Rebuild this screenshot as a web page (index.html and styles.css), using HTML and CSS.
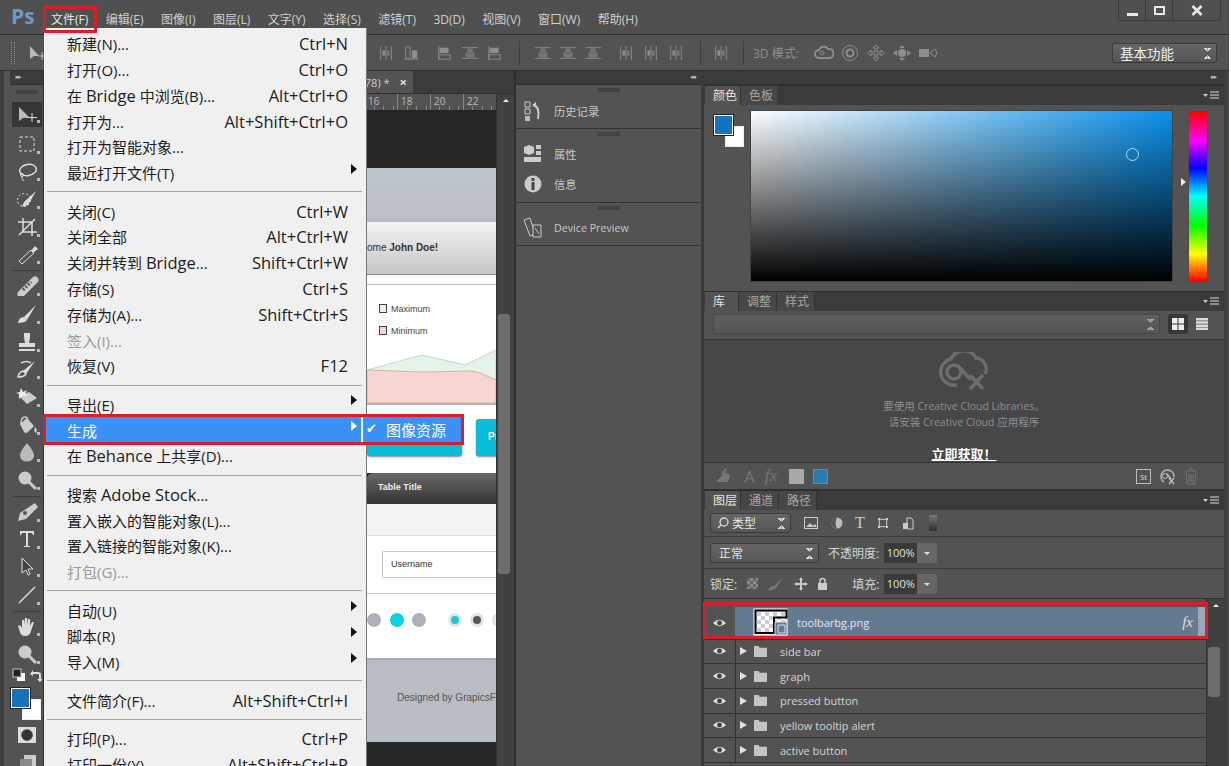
FILE: index.html
```html
<!DOCTYPE html>
<html lang="zh-CN">
<head>
    <meta charset="UTF-8">
    <meta name="viewport" content="width=device-width, initial-scale=1.0">
    <title>Adobe Photoshop</title>
    <link rel="stylesheet" href="styles.css">
</head>
<body>
    <!-- Shared icons -->
    <svg class="sprite" xmlns="http://www.w3.org/2000/svg">
        <symbol id="i-eye" viewBox="0 0 16 12"><path d="M1 6q7-7 14 0q-7 7-14 0z" fill="#ddd"/><circle cx="8" cy="6" r="2.6" fill="#444"/></symbol>
        <symbol id="i-folder" viewBox="0 0 16 14"><path d="M1 1h5l1 2h8v10H1z" fill="#c4c4c4"/></symbol>
        <symbol id="i-panelmenu" viewBox="0 0 16 8"><path d="M0 3h5L2.5 6z" fill="#ccc"/><path d="M7 1h9M7 4h9M7 7h9" stroke="#ddd"/></symbol>
        <symbol id="i-grip" viewBox="0 0 22 4"><path d="M1 0v4M3 0v4M5 0v4M7 0v4M9 0v4M11 0v4M13 0v4M15 0v4M17 0v4M19 0v4M21 0v4" stroke="#333"/></symbol>
        <symbol id="i-align" viewBox="0 0 18 18"><path d="M1 16h16M3 2h5v13H3z" stroke="#8e8e8e" fill="none"/><path d="M10 6h6v9h-6z" fill="#8e8e8e"/></symbol>
        <symbol id="i-alignl" viewBox="0 0 18 18"><path d="M2 1v16M2 11h13v5H2z" stroke="#8e8e8e" fill="none"/><path d="M3 3h10v6H3z" fill="#8e8e8e"/></symbol>
        <symbol id="i-alignh" viewBox="0 0 18 18"><path d="M0 3h18M0 15h18M4 9h10" stroke="#8e8e8e"/><path d="M6 4h6v4H6zM4 10h10v4H4z" fill="#777"/></symbol>
        <symbol id="i-alignv" viewBox="0 0 18 18"><path d="M3 1v16M15 1v16M9 1v16" stroke="#8e8e8e"/><path d="M5 6h3v6H5z" fill="#8e8e8e"/><path d="M10 6h3v6h-3z" fill="#777"/></symbol>
    </svg>

    <div class="app">
        <!-- Title and menu bar -->
        <header class="titlebar">
            <div class="ps-logo">Ps</div>
            <nav class="menubar">
                <span class="menubar-item is-open">文件(F)</span>
                <span class="menubar-item">编辑(E)</span>
                <span class="menubar-item">图像(I)</span>
                <span class="menubar-item">图层(L)</span>
                <span class="menubar-item">文字(Y)</span>
                <span class="menubar-item">选择(S)</span>
                <span class="menubar-item">滤镜(T)</span>
                <span class="menubar-item">3D(D)</span>
                <span class="menubar-item">视图(V)</span>
                <span class="menubar-item">窗口(W)</span>
                <span class="menubar-item">帮助(H)</span>
            </nav>
            <div class="win-buttons">
                <div class="win-btn win-min"><i></i></div>
                <div class="win-btn win-max"><i></i></div>
                <div class="win-btn win-close">
                    <svg width="12" height="11" viewBox="0 0 12 11"><path d="M1.5 1l9 9M10.5 1l-9 9" stroke="#e8e8e8" stroke-width="2.6"/></svg>
                </div>
            </div>
        </header>

        <!-- Options bar -->
        <div class="optionsbar">
            <div class="opt-grip"></div>
            <svg class="opt-move" width="20" height="18" viewBox="0 0 20 18"><path d="M2 2v13l4-3 5 0z" fill="#bbb"/><path d="M14 8v8M10 12h8" stroke="#bbb"/></svg>
            <div class="opt-icons">
                <svg class="op op-s1"><use href="#i-alignv"/></svg>
                <svg class="op op-s2"><use href="#i-align"/></svg>
                <svg class="op op-s3"><use href="#i-alignl"/></svg>
                <svg class="op op-s2"><use href="#i-alignh"/></svg>
                <svg class="op op-s2"><use href="#i-alignl"/></svg>
                <div class="opt-sep"></div>
                <svg class="op op-s2"><use href="#i-alignh"/></svg>
                <svg class="op op-s2"><use href="#i-alignh"/></svg>
                <svg class="op op-s2"><use href="#i-alignh"/></svg>
                <svg class="op op-s4"><use href="#i-alignv"/></svg>
                <svg class="op op-s2"><use href="#i-alignv"/></svg>
                <svg class="op op-s2"><use href="#i-alignv"/></svg>
                <div class="opt-sep opt-sep-b"></div>
                <svg class="op op-s2"><use href="#i-alignv"/></svg>
                <div class="opt-sep opt-sep-c"></div>
            </div>
            <span class="opt-label">3D 模式:</span>
            <div class="opt-3d">
                <svg width="20" height="18" viewBox="0 0 20 18"><path d="M5 14a4 4 0 0 1 0-8a5 5 0 0 1 9-1a4 4 0 0 1 2 9z" fill="none" stroke="#8e8e8e" stroke-width="2"/><circle cx="8" cy="9" r="2" fill="none" stroke="#8e8e8e"/></svg>
                <svg width="20" height="18" viewBox="0 0 20 18"><circle cx="10" cy="9" r="7.5" fill="none" stroke="#8e8e8e"/><circle cx="10" cy="9" r="3.5" fill="none" stroke="#8e8e8e" stroke-width="2"/></svg>
                <svg width="20" height="18" viewBox="0 0 20 18"><path d="M10 1l3 3h-2v4h4V6l3 3-3 3v-2h-4v4h2l-3 3-3-3h2v-4H5v2L2 9l3-3v2h4V4H7z" fill="none" stroke="#8e8e8e"/></svg>
                <svg width="20" height="18" viewBox="0 0 20 18"><path d="M10 1l3 3H7zM10 17l3-3H7zM1 9l4-3v6zM19 9l-4-3v6z" fill="#8e8e8e"/><circle cx="10" cy="9" r="4" fill="#8e8e8e"/></svg>
                <svg width="20" height="18" viewBox="0 0 20 18"><path d="M1 5h10v8H1z" fill="#8e8e8e"/><path d="M12 9l5-4 2 4-2 4z" fill="none" stroke="#8e8e8e"/></svg>
            </div>
            <div class="workspace-select">基本功能<span class="updown"></span></div>
        </div>

        <div class="workspace">
            <!-- Tools -->
            <aside class="toolbar">
                <div class="collapse-strip"><span class="chev">▸▸</span></div>
                <svg class="grip-icon"><use href="#i-grip"/></svg>
                <div class="tool is-active"><svg viewBox="0 0 24 20"><path d="M4 2v14l4-3 7 0z" fill="#bbb"/><path d="M17 8v9M13 12.5h9" stroke="#ddd"/></svg></div>
                <div class="tool"><svg viewBox="0 0 24 20"><rect x="5" y="3" width="14" height="14" fill="none" stroke="#ddd" stroke-dasharray="3 2"/></svg></div>
                <div class="tool"><svg viewBox="0 0 24 20"><ellipse cx="13" cy="8" rx="8.5" ry="5.5" fill="none" stroke="#ddd" stroke-width="1.5" transform="rotate(-10 13 8)"/><circle cx="7" cy="13" r="1.5" fill="none" stroke="#ddd"/><path d="M7 14q-1 3 2 5" fill="none" stroke="#ddd"/></svg></div>
                <div class="tool"><svg viewBox="0 0 24 20"><circle cx="9" cy="11" r="6.5" fill="none" stroke="#ddd" stroke-dasharray="2 2"/><path d="M21 2L9 13l-2 5 6-2z" fill="#ddd"/></svg></div>
                <div class="tool"><svg viewBox="0 0 24 20"><path d="M8 1v14h14M3 5h14v14M4 18L20 2" fill="none" stroke="#ddd" stroke-width="1.5"/></svg></div>
                <div class="tool"><svg viewBox="0 0 24 20"><path d="M7 19l-3-3L16 5l3 3z" fill="none" stroke="#ddd"/><path d="M16 6l4-5 3 3-5 4z" fill="#ddd"/></svg></div>
                <div class="tool-sep"></div>
                <div class="tool"><svg viewBox="0 0 24 20"><path d="M6 18L20 4" stroke="#ccc" stroke-width="7" stroke-linecap="round"/><path d="M8 14l8-8" stroke="#555" stroke-width="3" stroke-dasharray="2 1.5"/></svg></div>
                <div class="tool"><svg viewBox="0 0 24 20"><path d="M21 1L9 13l3 3z" fill="#ddd"/><path d="M9 13q-5 0-6 6q7 0 9-3z" fill="#ddd"/></svg></div>
                <div class="tool"><svg viewBox="0 0 24 20"><path d="M9 1h6v4l-1 6h6v4H4v-4h6L9 5zM4 17h16v2H4z" fill="#ddd"/></svg></div>
                <div class="tool"><svg viewBox="0 0 24 20"><path d="M20 2L8 12l3 3z" fill="#ddd"/><path d="M8 12q-4 1-5 6q6 0 8-3zM6 4q6-3 10 0" fill="none" stroke="#ddd" stroke-width="1.5"/></svg></div>
                <div class="tool"><svg viewBox="0 0 24 20"><path d="M4 9l8 8 10-6-8-6z" fill="#ccc"/><path d="M6 1l2 4 4-2-2 4 3 2-6 0-3 3 0-5-3-1 4-1z" fill="#eee"/></svg></div>
                <div class="tool"><svg viewBox="0 0 24 20"><path d="M5 9l7-6 7 8-6 6q-2 2-4 0z" fill="#ccc"/><path d="M6 9q0-7 4-7t2 7" fill="none" stroke="#ccc" stroke-width="1.5"/><path d="M20 12q3 3 1 6q-3-1-1-6z" fill="#ccc"/></svg></div>
                <div class="tool"><svg viewBox="0 0 24 20"><path d="M12 1q8 10 7 13a7 5.5 0 0 1-14 0Q4 11 12 1z" fill="#bbb"/></svg></div>
                <div class="tool"><svg viewBox="0 0 24 20"><circle cx="10" cy="8" r="6.5" fill="#ccc"/><path d="M14 12l7 7" stroke="#ccc" stroke-width="3"/></svg></div>
                <div class="tool-sep"></div>
                <div class="tool"><svg viewBox="0 0 24 20"><path d="M20 1l3 4-12 12-8 2 2-8z" fill="#ccc"/><circle cx="10" cy="11" r="2" fill="#555"/></svg></div>
                <div class="tool"><svg viewBox="0 0 24 20"><path d="M5 2h14v4h-1l-1-2h-4v13h2v1H9v-1h2V4H7L6 6H5z" fill="#ddd"/></svg></div>
                <div class="tool"><svg viewBox="0 0 24 20"><path d="M7 1v15l4-3 2 5 2-1-2-5h5z" fill="#444" stroke="#ddd"/></svg></div>
                <div class="tool"><svg viewBox="0 0 24 20"><path d="M4 18L20 2" stroke="#ddd" stroke-width="1.5"/></svg></div>
                <div class="tool-sep"></div>
                <div class="tool"><svg viewBox="0 0 24 20"><path d="M7 9V3h2v5l1-7h2v7l1-6h2v7l2-4h2l-3 9q-1 5-6 5-4 0-5-4L3 9l2-1 2 3z" fill="#ddd"/></svg></div>
                <div class="tool"><svg viewBox="0 0 24 20"><circle cx="10" cy="8" r="6.5" fill="#ccc"/><path d="M14 12l7 7" stroke="#ccc" stroke-width="3"/></svg></div>
                <div class="swatch-mini">
                    <svg width="14" height="14" viewBox="0 0 14 14"><rect x="5" y="5" width="8" height="8" fill="#fff"/><rect x="1" y="1" width="8" height="8" fill="#222" stroke="#ccc"/></svg>
                    <svg width="14" height="14" viewBox="0 0 14 14"><path d="M2 6l3-4v2h5a3 3 0 0 1 3 3v4h2l-3 3-3-3h2V7a1 1 0 0 0-1-1H5v2z" fill="#ddd"/></svg>
                </div>
                <div class="swatches swatches-tool">
                    <div class="swatch-bg"></div>
                    <div class="swatch-fg"></div>
                </div>
                <div class="tool tool-mask"><svg viewBox="0 0 24 20"><rect x="3" y="2" width="18" height="16" fill="#ddd"/><circle cx="12" cy="10" r="5.5" fill="#333" stroke="#555" stroke-dasharray="2 1"/></svg></div>
                <div class="tool"><svg viewBox="0 0 24 20"><path d="M9 2h12v12H9z" fill="#ccc"/><path d="M5 6h12v12H5z" fill="#888"/></svg></div>
            </aside>

            <!-- Document window, mostly hidden behind the menu -->
            <main class="document">
                <div class="doc-tabs">
                    <div class="doc-tab"><span>78) *</span><b>×</b></div>
                </div>
                <div class="doc-ruler">
                    <span class="tick">16</span><span class="tick">18</span><span class="tick">20</span><span class="tick">22</span>
                </div>
                <div class="doc-body">
                    <div class="canvas">
                        <div class="cv-dark"></div>
                        <div class="cv-band"></div>
                        <div class="cv-welcome">ome&nbsp;<b>John Doe!</b></div>
                        <div class="cv-strip"></div>
                        <div class="cv-graph">
                            <div class="legend"><i class="legend-max"></i>Maximum</div>
                            <div class="legend"><i class="legend-min"></i>Minimum</div>
                            <svg class="graph-svg" viewBox="0 0 129 60" preserveAspectRatio="none">
                                <path d="M0 27L55 12L98 22L129 7V60H0z" fill="#e3f5e9" stroke="#c4d8ca"/>
                                <path d="M0 27L55 29L105 28L113 30L129 37V60H0z" fill="#f7d5d2" stroke="#d8b0ae"/>
                            </svg>
                        </div>
                        <div class="cv-buttons">
                            <div class="cv-btn cv-btn-a"></div>
                            <div class="cv-btn cv-btn-b">Pr</div>
                        </div>
                        <div class="cv-table">Table Title</div>
                        <div class="cv-gap"></div>
                        <div class="cv-form"><div class="cv-input">Username</div></div>
                        <div class="cv-dots">
                            <i class="dot"></i><i class="dot dot-on"></i><i class="dot"></i>
                            <i class="radio radio-on"></i><i class="radio"></i><i class="radio radio-off"></i>
                        </div>
                        <div class="cv-footer">Designed by GrapicsF</div>
                        <div class="cv-dark"></div>
                    </div>
                    <div class="doc-scroll"><span class="doc-scroll-up"></span><div class="doc-thumb"></div></div>
                </div>
            </main>

            <!-- Collapsed panels -->
            <section class="dock-mid">
                <div class="collapse-strip collapse-right"><span class="chev">◂◂</span></div>
                <div class="dock-group">
                    <svg class="grip-icon"><use href="#i-grip"/></svg>
                    <div class="dock-item">
                        <svg width="20" height="20" viewBox="0 0 20 20"><path d="M2 1h5v5H2zM2 8h5v5H2z" fill="none" stroke="#ccc"/><path d="M2 15h5v5H2z" fill="#bbb"/><path d="M11 4q6 2 4 14" fill="none" stroke="#ccc" stroke-width="2"/><path d="M9 4l4-3v6z" fill="#ccc"/></svg>
                        <span>历史记录</span>
                    </div>
                </div>
                <div class="dock-group">
                    <svg class="grip-icon"><use href="#i-grip"/></svg>
                    <div class="dock-item">
                        <svg width="20" height="20" viewBox="0 0 20 20"><path d="M6 1l5 2v6l-5 2-5-2V3z" fill="#ccc"/><path d="M13 1h5v4h-5zM13 7h5v4h-5zM1 13h17v5H1z" fill="#ccc"/></svg>
                        <span>属性</span>
                    </div>
                    <div class="dock-item">
                        <svg width="20" height="20" viewBox="0 0 20 20"><circle cx="10" cy="10" r="8.5" fill="#ccc"/><path d="M8.500 8h3v8h-3zM8.500 4h3v3h-3z" fill="#444"/></svg>
                        <span>信息</span>
                    </div>
                </div>
                <div class="dock-group">
                    <svg class="grip-icon"><use href="#i-grip"/></svg>
                    <div class="dock-item">
                        <svg width="20" height="22" viewBox="0 0 20 22"><path d="M1 3l6-2 5 16-5 2z" fill="none" stroke="#ccc"/><path d="M10 8h8v12h-8z" fill="#535353" stroke="#ccc"/><path d="M12 11l4 6" stroke="#ccc"/></svg>
                        <span class="dock-latin">Device Preview</span>
                    </div>
                </div>
            </section>

            <!-- Right hand panels -->
            <section class="dock-right">
                <div class="collapse-strip collapse-left"><span class="chev">▸▸</span></div>

                <div class="tabs">
                    <span class="tab is-active">颜色</span><span class="tab">色板</span>
                    <svg class="panel-menu"><use href="#i-panelmenu"/></svg>
                </div>
                <div class="color-panel">
                    <div class="swatches">
                        <div class="swatch-bg"></div>
                        <div class="swatch-fg"></div>
                    </div>
                    <div class="color-field"><i class="color-pick"></i></div>
                    <div class="hue-wrap"><i class="hue-arrow"></i><div class="hue-bar"></div></div>
                </div>

                <div class="tabs">
                    <span class="tab tab-lib is-active">库</span><span class="tab">调整</span><span class="tab">样式</span>
                    <svg class="panel-menu"><use href="#i-panelmenu"/></svg>
                </div>
                <div class="lib-top">
                    <div class="lib-select"><span class="updown"></span></div>
                    <div class="lib-view is-active">
                        <svg width="12" height="12" viewBox="0 0 12 12"><path d="M0 0h5.500v5.500H0zM6.500 0H12v5.500H6.500zM0 6.500h5.500V12H0zM6.500 6.500H12V12H6.500z" fill="#eee"/></svg>
                    </div>
                    <div class="lib-view">
                        <svg width="12" height="12" viewBox="0 0 12 12"><path d="M0 0h12v2.500H0zM0 3.200h12v2.500H0zM0 6.400h12v2.500H0zM0 9.500h12V12H0z" fill="#ddd"/></svg>
                    </div>
                </div>
                <div class="lib-body">
                    <svg class="lib-cloud" width="50" height="40" viewBox="0 0 50 40"><path d="M18 33a13 13 0 0 1-6-26a14 14 0 0 1 25-1a11 11 0 0 1 9 16" fill="none" stroke="#6c6c6c" stroke-width="3.5"/><circle cx="15" cy="20" r="7" fill="none" stroke="#6c6c6c" stroke-width="3.5"/><path d="M19 14l13 14" fill="none" stroke="#6c6c6c" stroke-width="3.5"/><path d="M31 23l13 14M44 23L31 37" fill="none" stroke="#6c6c6c" stroke-width="3.5"/></svg>
                    <p class="lib-text">要使用 Creative Cloud Libraries。</p>
                    <p class="lib-text">请安装 Creative Cloud 应用程序</p>
                    <a class="lib-link">立即获取！</a>
                </div>
                <div class="lib-foot">
                    <svg width="18" height="16" viewBox="0 0 18 16"><path d="M2 14l9-10 5 3-2 7z" fill="#777"/><path d="M8 6l4-5" stroke="#777" stroke-width="2"/></svg>
                    <span class="lib-foot-a">A</span>
                    <span class="lib-foot-fx">fx</span>
                    <i class="lib-chip lib-chip-grey"></i>
                    <i class="lib-chip lib-chip-blue"></i>
                    <div class="lib-foot-right">
                        <span class="lib-st">St</span>
                        <svg width="17" height="17" viewBox="0 0 17 17"><path d="M5 14a6.500 6.500 0 1 1 10-5" fill="none" stroke="#bbb" stroke-width="1.500"/><circle cx="6" cy="8" r="2.500" fill="none" stroke="#bbb"/><path d="M8 6l4 5M10 10l5 6M15 10l-5 6" stroke="#bbb" stroke-width="1.500"/></svg>
                        <svg width="14" height="17" viewBox="0 0 14 17"><path d="M1 3h12M5 1h4M2 4l1 12h8l1-12M5 6v8M7 6v8M9 6v8" fill="none" stroke="#777"/></svg>
                    </div>
                </div>

                <div class="tabs tabs-layers">
                    <span class="tab is-active">图层</span><span class="tab">通道</span><span class="tab">路径</span>
                    <svg class="panel-menu"><use href="#i-panelmenu"/></svg>
                </div>
                <div class="layer-row-tools layer-filter">
                    <div class="select select-filter">
                        <svg width="12" height="12" viewBox="0 0 12 12"><circle cx="7" cy="5" r="4" fill="none" stroke="#ddd" stroke-width="1.300"/><path d="M4 8l-3 3" stroke="#ddd" stroke-width="1.500"/></svg>
                        类型<span class="updown"></span>
                    </div>
                    <div class="filter-icons">
                        <svg width="14" height="12" viewBox="0 0 14 12"><rect x=".5" y=".5" width="13" height="11" fill="none" stroke="#ccc"/><path d="M2 10l4-4 3 3 2-2 2 3z" fill="#ccc"/></svg>
                        <svg width="12" height="12" viewBox="0 0 12 12"><circle cx="6" cy="6" r="5.500" fill="#bbb"/><path d="M6 .5a5.500 5.500 0 0 0 0 11q-3-5 0-11z" fill="#555"/></svg>
                        <span class="filter-t">T</span>
                        <svg width="12" height="12" viewBox="0 0 12 12"><path d="M2 2q4 1 8 0q-1 4 0 8q-4-1-8 0q1-4 0-8z" fill="none" stroke="#ccc"/><path d="M1 1h2v2H1zM9 1h2v2H9zM1 9h2v2H1zM9 9h2v2H9z" fill="#ccc"/></svg>
                        <svg width="12" height="13" viewBox="0 0 12 13"><path d="M5 1h4l2 2v9H5z" fill="none" stroke="#ccc"/><path d="M1 6h5v6H1z" fill="#ccc"/></svg>
                        <i class="filter-toggle"></i>
                    </div>
                </div>
                <div class="layer-row-tools layer-blend">
                    <div class="select select-blend">正常<span class="updown"></span></div>
                    <span class="tool-label tool-label-op">不透明度:</span>
                    <div class="num-input">100%</div><div class="num-btn"></div>
                </div>
                <div class="layer-row-tools layer-lock">
                    <span class="tool-label">锁定:</span>
                    <div class="lock-icons">
                        <i class="lock-check"></i>
                        <svg width="18" height="14" viewBox="0 0 18 14"><path d="M16 1L7 9l2 2zM7 9q-4 0-6 4q6 1 8-2z" fill="#777"/></svg>
                        <svg width="14" height="14" viewBox="0 0 14 14"><path d="M7 0l2 3H8v3h3V5l3 2-3 2V8H8v3h1l-2 3-2-3h1V8H3v1L0 7l3-2v1h3V3H5z" fill="#ccc"/></svg>
                        <svg width="11" height="14" viewBox="0 0 11 14"><path d="M3 6V4a2.500 2.500 0 0 1 5 0v2" fill="none" stroke="#ccc" stroke-width="1.500"/><path d="M1 6h9v7H1z" fill="#ccc"/></svg>
                    </div>
                    <span class="tool-label tool-label-fill">填充:</span>
                    <div class="num-input">100%</div><div class="num-btn"></div>
                </div>

                <div class="layers-wrap">
                    <ul class="layers">
                        <li class="layer is-selected">
                            <svg class="eye"><use href="#i-eye"/></svg>
                            <svg class="thumb" width="36" height="30" viewBox="0 0 36 30">
                                <defs><pattern id="chk" width="8" height="8" patternUnits="userSpaceOnUse"><rect width="8" height="8" fill="#fff"/><rect width="4" height="4" fill="#ccc"/><rect x="4" y="4" width="4" height="4" fill="#ccc"/></pattern></defs>
                                <rect x="1" y="1" width="33" height="26" fill="url(#chk)" stroke="#fff"/>
                                <path d="M2.500 2.500h31v7H21v15.500H2.500z" fill="none" stroke="#000" stroke-width="2"/>
                                <path d="M22 14h12v13H22z" fill="#647a90" stroke="#dde"/>
                                <path d="M25 17h7v8h-7z" fill="none" stroke="#dde"/>
                            </svg>
                            <span class="layer-name">toolbarbg.png</span>
                            <span class="layer-fx">fx</span>
                            <i class="layer-fx-bar"></i>
                        </li>
                        <li class="layer"><svg class="eye"><use href="#i-eye"/></svg><i class="disclose"></i><svg class="folder"><use href="#i-folder"/></svg><span class="layer-name">side bar</span></li>
                        <li class="layer"><svg class="eye"><use href="#i-eye"/></svg><i class="disclose"></i><svg class="folder"><use href="#i-folder"/></svg><span class="layer-name">graph</span></li>
                        <li class="layer"><svg class="eye"><use href="#i-eye"/></svg><i class="disclose"></i><svg class="folder"><use href="#i-folder"/></svg><span class="layer-name">pressed button</span></li>
                        <li class="layer"><svg class="eye"><use href="#i-eye"/></svg><i class="disclose"></i><svg class="folder"><use href="#i-folder"/></svg><span class="layer-name">yellow tooltip alert</span></li>
                        <li class="layer"><svg class="eye"><use href="#i-eye"/></svg><i class="disclose"></i><svg class="folder"><use href="#i-folder"/></svg><span class="layer-name">active button</span></li>
                    </ul>
                    <div class="layers-scroll"><span class="doc-scroll-up"></span><div class="layers-thumb"></div></div>
                </div>
            </section>
        </div>

        <!-- File menu -->
        <div class="file-menu">
            <div class="mi"><span>新建(N)...</span><kbd>Ctrl+N</kbd></div>
            <div class="mi"><span>打开(O)...</span><kbd>Ctrl+O</kbd></div>
            <div class="mi"><span>在 <em>Bridge</em> 中浏览(B)...</span><kbd>Alt+Ctrl+O</kbd></div>
            <div class="mi"><span>打开为...</span><kbd>Alt+Shift+Ctrl+O</kbd></div>
            <div class="mi"><span>打开为智能对象...</span></div>
            <div class="mi"><span>最近打开文件(T)</span><i class="mi-arrow"></i></div>
            <div class="mi-sep"></div>
            <div class="mi"><span>关闭(C)</span><kbd>Ctrl+W</kbd></div>
            <div class="mi"><span>关闭全部</span><kbd>Alt+Ctrl+W</kbd></div>
            <div class="mi"><span>关闭并转到 <em>Bridge</em>...</span><kbd>Shift+Ctrl+W</kbd></div>
            <div class="mi"><span>存储(S)</span><kbd>Ctrl+S</kbd></div>
            <div class="mi"><span>存储为(A)...</span><kbd>Shift+Ctrl+S</kbd></div>
            <div class="mi is-disabled"><span>签入(I)...</span></div>
            <div class="mi"><span>恢复(V)</span><kbd>F12</kbd></div>
            <div class="mi-sep"></div>
            <div class="mi"><span>导出(E)</span><i class="mi-arrow"></i></div>
            <div class="mi is-hover">
                <span>生成</span><i class="mi-arrow"></i>
                <div class="submenu"><span class="sub-check">✔</span>图像资源</div>
            </div>
            <div class="mi"><span>在 <em>Behance</em> 上共享(D)...</span></div>
            <div class="mi-sep"></div>
            <div class="mi"><span>搜索 <em>Adobe Stock</em>...</span></div>
            <div class="mi"><span>置入嵌入的智能对象(L)...</span></div>
            <div class="mi"><span>置入链接的智能对象(K)...</span></div>
            <div class="mi is-disabled"><span>打包(G)...</span></div>
            <div class="mi-sep"></div>
            <div class="mi"><span>自动(U)</span><i class="mi-arrow"></i></div>
            <div class="mi"><span>脚本(R)</span><i class="mi-arrow"></i></div>
            <div class="mi"><span>导入(M)</span><i class="mi-arrow"></i></div>
            <div class="mi-sep"></div>
            <div class="mi"><span>文件简介(F)...</span><kbd>Alt+Shift+Ctrl+I</kbd></div>
            <div class="mi-sep"></div>
            <div class="mi"><span>打印(P)...</span><kbd>Ctrl+P</kbd></div>
            <div class="mi"><span>打印一份(Y)</span><kbd>Alt+Shift+Ctrl+P</kbd></div>
        </div>

        <!-- Red annotation boxes drawn over the screenshot -->
        <div class="mark mark-file"></div>
        <div class="mark mark-generate"></div>
        <div class="mark mark-layer"></div>
    </div>
</body>
</html>
```

FILE: styles.css
```css
* {
    margin: 0;
    padding: 0;
    box-sizing: border-box;
}

html {
    background: #fff;
}

body {
    font-family: "Open Sans", "Noto Sans CJK SC", sans-serif;
    font-size: 12px;
    color: #d4d4d4;
}

.sprite {
    display: none;
}

.app {
    position: relative;
    width: 1229px;
    height: 766px;
    overflow: hidden;
    background: #535353;
    display: flex;
    flex-direction: column;
}

/* Title bar */
.titlebar {
    flex: none;
    height: 35px;
    background: #505050;
    border-bottom: 1px solid #2f2f2f;
    display: flex;
    align-items: flex-start;
}

.ps-logo {
    width: 45px;
    padding: 3px 0 0 11px;
    font-size: 21px;
    line-height: 26px;
    font-weight: 700;
    color: #6b9cc9;
}

.menubar {
    display: flex;
    padding: 11px 0 0 6px;
    gap: 17.5px;
    line-height: 17px;
    color: #cfcfcf;
}

.menubar-item.is-open {
    color: #e8e8e8;
}

.win-buttons {
    margin-left: auto;
    margin-right: 8px;
    display: flex;
    height: 21px;
    border: 1px solid #3a3a3a;
    border-top: 0;
    border-radius: 0 0 3px 3px;
}

.win-btn {
    display: flex;
    align-items: center;
    justify-content: center;
    width: 27px;
    border-right: 1px solid #3a3a3a;
}

.win-close {
    width: 47px;
    border-right: 0;
}

.win-min i {
    display: block;
    width: 11px;
    height: 3px;
    margin-top: 8px;
    background: #e8e8e8;
}

.win-max i {
    display: block;
    width: 11px;
    height: 9px;
    border: 2px solid #e8e8e8;
}

/* Options bar */
.optionsbar {
    flex: none;
    height: 36px;
    background: #535353;
    border-bottom: 1px solid #2f2f2f;
    display: flex;
    align-items: center;
    position: relative;
}

.opt-grip {
    width: 4px;
    height: 22px;
    margin-left: 11px;
    border-left: 1px dotted #888;
    border-right: 1px dotted #888;
}

.opt-move {
    margin-left: 13px;
}

.opt-icons {
    display: flex;
    align-items: center;
    margin-left: 330px;
}

.op {
    width: 16px;
    height: 18px;
    flex: none;
}

.op-s2 {
    margin-left: 9px;
}

.op-s3 {
    margin-left: 18px;
}

.op-s4 {
    margin-left: 17px;
}

.opt-sep {
    width: 1px;
    height: 24px;
    margin: 0 6px 0 16px;
    background: #3c3c3c;
}

.opt-sep-b {
    margin: 0 3px 0 16px;
}

.opt-sep-c {
    margin: 0 0 0 14px;
}

.opt-label {
    margin-left: 9px;
    color: #8f8f8f;
    white-space: nowrap;
}

.opt-3d {
    display: flex;
    gap: 6px;
    margin-left: 15px;
}

.workspace-select {
    position: relative;
    margin-left: auto;
    margin-right: 12px;
    width: 105px;
    height: 20px;
    padding-left: 7px;
    font-size: 13.5px;
    line-height: 20px;
    color: #f0f0f0;
    background: linear-gradient(#666, #565656);
    border: 1px solid #3a3a3a;
    border-radius: 2px;
}

.updown {
    position: absolute;
    right: 5px;
    top: 50%;
    width: 7px;
    height: 11px;
    margin-top: -5px;
    background:
        linear-gradient(45deg, transparent 50%, #ddd 50%) 0 0 / 3.5px 4px no-repeat,
        linear-gradient(-45deg, transparent 50%, #ddd 50%) 3.5px 0 / 3.5px 4px no-repeat,
        linear-gradient(135deg, transparent 50%, #ddd 50%) 0 7px / 3.5px 4px no-repeat,
        linear-gradient(-135deg, transparent 50%, #ddd 50%) 3.5px 7px / 3.5px 4px no-repeat;
}

/* Workspace columns */
.workspace {
    flex: 1;
    min-height: 0;
    display: flex;
}

.collapse-strip {
    flex: none;
    height: 14px;
    background: #3b3b3b;
    border-bottom: 1px solid #2f2f2f;
    display: flex;
    align-items: center;
    padding: 0 6px;
}

.chev {
    font-size: 7px;
    line-height: 1;
    color: #bbb;
    letter-spacing: -1px;
    font-family: "DejaVu Sans", sans-serif;
}

.collapse-right,
.collapse-left {
    justify-content: flex-end;
}

.collapse-left {
    padding-right: 8px;
}

.grip-icon {
    display: block;
    width: 22px;
    height: 4px;
    margin: 0 auto;
    flex: none;
}

/* Tools column */
.toolbar {
    flex: none;
    width: 44px;
    padding-left: 6px;
    background: #535353;
    display: flex;
    flex-direction: column;
    align-items: center;
    border-left: 4px solid #3d3d3d;
    border-right: 1px solid #2f2f2f;
}

.toolbar .collapse-strip {
    width: 100%;
    margin-left: -1px;
}

.toolbar .grip-icon {
    margin: 5px 0 6px;
}

.tool {
    flex: none;
    width: 30px;
    height: 27.7px;
    display: flex;
    align-items: center;
    justify-content: center;
    position: relative;
}

.tool svg {
    width: 24px;
    height: 20px;
}

.tool::after {
    content: '';
    position: absolute;
    right: 2px;
    bottom: 4px;
    width: 3px;
    height: 3px;
    background: #bbb;
}

.tool.is-active {
    height: 25px;
    margin: 2px 0 3px;
    background: #363636;
}

.tool-mask::after {
    display: none;
}

.tool-sep {
    flex: none;
    width: 28px;
    height: 1px;
    margin: 2px 0 1px;
    background: #3a3a3a;
}

.swatch-mini {
    flex: none;
    display: flex;
    justify-content: space-between;
    width: 30px;
}

.swatches {
    position: relative;
    flex: none;
    width: 30px;
    height: 32px;
}

.swatches-tool {
    margin: 6px 0 1px -1px;
}

.swatch-fg {
    position: absolute;
    left: 0;
    top: 0;
    width: 19px;
    height: 20px;
    background: #1373bf;
    border: 1px solid #fff;
    outline: 1px solid #222;
}

.swatch-bg {
    position: absolute;
    right: 0;
    bottom: 0;
    width: 19px;
    height: 21px;
    background: #fff;
    border: 1px solid #eee;
}

/* Document */
.document {
    flex: none;
    width: 470px;
    display: flex;
    flex-direction: column;
    background: #3b3b3b;
}

.doc-tabs {
    flex: none;
    height: 23px;
    background: #3b3b3b;
    border-bottom: 1px solid #2f2f2f;
    display: flex;
}

.doc-tab {
    width: 369px;
    background: #535353;
    display: flex;
    justify-content: flex-end;
    align-items: center;
    gap: 10px;
    padding-right: 6px;
    font-size: 11px;
    color: #ccc;
}

.doc-tab b {
    color: #ddd;
    font-size: 13px;
}

.doc-ruler {
    flex: none;
    height: 17px;
    background: #535353;
    border-bottom: 1px solid #222;
    display: flex;
    padding-left: 320px;
    width: 452px;
}

.tick {
    width: 38px;
    padding-left: 3px;
    font-size: 10px;
    line-height: 14px;
    color: #bbb;
    border-left: 1px solid #888;
    background: repeating-linear-gradient(to right, transparent 0 8.5px, #888 8.5px 9.5px) bottom / 100% 4px no-repeat;
}

.doc-body {
    flex: 1;
    min-height: 0;
    display: flex;
    margin-top: -17px;
}

.canvas {
    flex: none;
    width: 452px;
    margin-top: 17px;
    display: flex;
    flex-direction: column;
    padding-left: 323px;
    font-family: "Liberation Sans", sans-serif;
    background: #262626;
    color: #333;
    overflow: hidden;
}

.cv-dark {
    flex: none;
    height: 57px;
    background: #262626;
    margin-left: -323px;
}

.cv-band {
    flex: none;
    height: 54px;
    background: linear-gradient(#bfc7cb, #babdc7);
}

.cv-welcome {
    flex: none;
    height: 53px;
    line-height: 52px;
    font-size: 10px;
    background: linear-gradient(#f3f3f3, #c6c6c6);
    border-bottom: 1px solid #858585;
}

.cv-strip {
    flex: none;
    height: 9px;
    background: #fff;
}

.cv-graph {
    flex: none;
    position: relative;
    height: 121px;
    padding: 18px 0 0 12px;
    background: #fff;
    border-top: 1px solid #bbb;
    border-bottom: 2px solid #b5b5b5;
    font-size: 9px;
}

.legend {
    display: flex;
    align-items: center;
    height: 11px;
    margin-bottom: 11px;
    gap: 4px;
    color: #444;
}

.legend i {
    width: 8px;
    height: 9px;
    border: 1px solid;
}

.legend-max {
    background: #e4f6ee;
    border-color: #a9cfc2;
}

.legend-min {
    background: #f9d6d3;
    border-color: #dd9d99;
}

.graph-svg {
    position: absolute;
    left: 0;
    bottom: 0;
    width: 129px;
    height: 60px;
}

.cv-buttons {
    flex: none;
    display: flex;
    height: 68px;
    background: #fff;
    padding-top: 14px;
}

.cv-btn {
    flex: none;
    height: 37px;
    background: #06bdd8;
    border-radius: 3px;
    box-shadow: 0 1px 2px #888;
}

.cv-btn-a {
    width: 95px;
}

.cv-btn-b {
    width: 40px;
    margin-left: 14px;
    padding-left: 12px;
    color: #fff;
    font-weight: 700;
    font-size: 10px;
    line-height: 36px;
}

.cv-table {
    flex: none;
    height: 31px;
    line-height: 29px;
    padding-left: 11px;
    font-size: 9px;
    font-weight: 700;
    color: #eee;
    border-radius: 6px 0 0 0;
    background: linear-gradient(#6a6a6a, #333);
}

.cv-gap {
    flex: none;
    height: 31px;
    background: #f3f3f3;
}

.cv-form {
    flex: none;
    height: 59px;
    padding: 15px 0 0 15px;
    background: #fff;
    border-top: 1px solid #ddd;
    border-bottom: 1px solid #ccc;
}

.cv-input {
    height: 27px;
    line-height: 24px;
    padding-left: 8px;
    font-size: 9px;
    color: #333;
    background: #fff;
    border: 1px solid #ccc;
    border-right: 0;
    border-radius: 2px 0 0 2px;
}

.cv-dots {
    flex: none;
    height: 64px;
    display: flex;
    align-items: flex-start;
    padding-top: 19px;
    gap: 8px;
    background: #fff;
}

.dot {
    flex: none;
    width: 14px;
    height: 14px;
    border-radius: 50%;
    background: #aeb0b8;
}

.dot:first-child {
    margin-right: 1px;
}

.dot-on {
    background: #0bd2e6;
}

.radio {
    flex: none;
    width: 14px;
    height: 14px;
    border-radius: 50%;
    border: 3px solid #e4e4e4;
    background: #555;
}

.radio-on {
    background: #1bc4d8;
    margin-left: 14px;
}

.radio-off {
    background: #eee;
}

.cv-footer {
    flex: none;
    height: 84px;
    line-height: 76px;
    padding-left: 30px;
    font-size: 10px;
    color: #555;
    background: #b8bcc3;
    border-top: 2px solid #a8abb2;
    white-space: nowrap;
}

.doc-scroll {
    flex: none;
    width: 18px;
    position: relative;
    background: #414141;
    border-left: 1px solid #333;
}

.doc-scroll-up {
    position: absolute;
    left: 6px;
    top: 5px;
    width: 0;
    height: 0;
    border: 3px solid transparent;
    border-top: 0;
    border-bottom: 3px solid #e8e8e8;
}

.doc-thumb {
    margin: 220px 4px 0 1px;
    height: 260px;
    background: #6d6d6d;
    border-radius: 3px;
}

/* Collapsed dock */
.dock-mid {
    flex: none;
    width: 190px;
    background: #535353;
    border-left: 2px solid #2f2f2f;
    border-right: 3px solid #3a3a3a;
    display: flex;
    flex-direction: column;
}

.dock-group {
    flex: none;
    padding-top: 3px;
    border-bottom: 1px solid #333;
}

.dock-item {
    display: flex;
    align-items: center;
    gap: 11px;
    height: 30px;
    padding-left: 7px;
    font-size: 11.3px;
    color: #c8c8c8;
}

.dock-latin {
    font-size: 10.7px;
}

.dock-group:nth-child(2) .dock-item {
    height: 36px;
    padding-top: 2px;
}

.dock-group:nth-child(3) .dock-item:first-of-type {
    margin-top: 3px;
}

.dock-group:nth-child(3) .dock-item:last-of-type {
    margin-bottom: 3px;
}

.dock-group:nth-child(4) .dock-item {
    height: 35px;
}

/* Right panels */
.dock-right {
    flex: none;
    width: 524px;
    border-right: 4px solid #3f3f3f;
    display: flex;
    flex-direction: column;
}

.tabs {
    flex: none;
    height: 20px;
    position: relative;
    display: flex;
    padding-left: 1px;
    background: #3b3b3b;
    border-top: 1px solid #2f2f2f;
}

.tab {
    width: 38px;
    padding-left: 8px;
    line-height: 19px;
    color: #a6a6a6;
    background: #474747;
    border-right: 1px solid #333;
}

.tab.is-active {
    width: 36px;
    color: #e4e4e4;
    background: #535353;
}

.tab.tab-lib {
    width: 34px;
}

.panel-menu {
    position: absolute;
    right: 5px;
    top: 5px;
    width: 16px;
    height: 8px;
}

.color-panel {
    flex: none;
    height: 186px;
    display: flex;
    align-items: flex-start;
    padding: 5px 0 0 10px;
}

.color-panel .swatches {
    margin-top: 5px;
}

.color-field {
    position: relative;
    width: 423px;
    height: 172px;
    margin-left: 6px;
    background:
        linear-gradient(to bottom, rgba(0, 0, 0, 0), #000),
        linear-gradient(to right, #fff, #0a90ea);
    border: 1px solid #434343;
}

.color-pick {
    position: absolute;
    left: 375px;
    top: 37px;
    width: 13px;
    height: 13px;
    border: 1.5px solid #a8dcf5;
    border-radius: 50%;
}

.hue-wrap {
    position: relative;
    padding-left: 15px;
    margin-top: 1px;
}

.hue-arrow {
    position: absolute;
    left: 8px;
    top: 67px;
    width: 0;
    height: 0;
    border: 4px solid transparent;
    border-left: 5px solid #eee;
    border-right: 0;
}

.hue-bar {
    width: 20px;
    height: 171px;
    background: linear-gradient(#f00 0%, #f0f 17%, #00f 33%, #0ff 50%, #0f0 67%, #ff0 84%, #f00 100%);
    border: 1px solid #5c4840;
}

.lib-top {
    flex: none;
    height: 29px;
    display: flex;
    align-items: center;
    padding: 0 8px 2px 9px;
    border-bottom: 1px solid #333;
}

.lib-select {
    position: relative;
    width: 450px;
    height: 20px;
    margin-right: 8px;
    background: linear-gradient(#5e5e5e, #565656);
    border: 1px solid #474747;
}

.lib-select .updown {
    opacity: 0.6;
}

.lib-view {
    width: 20px;
    height: 20px;
    margin-right: 4px;
    display: flex;
    align-items: center;
    justify-content: center;
    border-radius: 3px;
}

.lib-view.is-active {
    background: #363636;
}

.lib-body {
    flex: none;
    height: 122px;
    background: #474747;
    display: flex;
    flex-direction: column;
    align-items: center;
    overflow: hidden;
}

.lib-cloud {
    margin: 12px 0 6px;
    flex: none;
}

.lib-text {
    font-size: 10.5px;
    line-height: 16px;
    color: #8f8f8f;
}

.lib-link {
    margin-top: 16px;
    font-size: 13px;
    line-height: 16px;
    font-weight: 700;
    color: #fff;
    text-decoration: underline;
}

.lib-foot {
    flex: none;
    height: 27px;
    display: flex;
    align-items: center;
    gap: 9px;
    padding: 0 0 0 10px;
    border-top: 1px solid #333;
}

.lib-foot-a {
    font-size: 17px;
    color: #777;
    margin-left: 3px;
}

.lib-foot-fx {
    font-family: "Liberation Serif", serif;
    font-style: italic;
    font-size: 17px;
    color: #777;
    margin-left: 1px;
}

.lib-chip {
    width: 15px;
    height: 15px;
}

.lib-chip-grey {
    background: #a9a9a9;
    margin-left: 3px;
}

.lib-chip-blue {
    background: #2a7bb0;
    border: 1px solid #5b8eb0;
}

.lib-foot-right {
    margin-left: auto;
    display: flex;
    align-items: center;
    gap: 8px;
    padding-right: 26px;
}

.lib-st {
    width: 15px;
    height: 15px;
    border: 1px solid #bbb;
    font-size: 8px;
    line-height: 13px;
    text-align: center;
    color: #ddd;
}

.tabs-layers {
    border-top: 2px solid #2f2f2f;
    height: 21px;
}

.layer-row-tools {
    flex: none;
    display: flex;
    align-items: center;
    padding-left: 6px;
    border-bottom: 1px solid #3a3a3a;
}

.layer-filter {
    height: 27px;
}

.layer-blend {
    height: 32px;
}

.layer-lock {
    height: 29px;
    border-bottom: 0;
}

.select {
    position: relative;
    display: flex;
    align-items: center;
    gap: 3px;
    height: 20px;
    padding-left: 6px;
    color: #e4e4e4;
    background: linear-gradient(#666, #565656);
    border: 1px solid #3a3a3a;
    border-radius: 3px;
}

.select-filter {
    width: 81px;
}

.select-blend {
    width: 109px;
    padding-left: 8px;
}

.filter-icons {
    display: flex;
    align-items: center;
    gap: 12.5px;
    margin-left: 13px;
}

.filter-t {
    font-family: "Liberation Serif", serif;
    font-size: 16px;
    line-height: 14px;
    color: #ccc;
}

.filter-toggle {
    width: 8px;
    height: 16px;
    margin-left: 3px;
    background: linear-gradient(#777, #2f2f2f);
    border-radius: 1px;
}

.tool-label {
    color: #d4d4d4;
}

.tool-label-op {
    margin-left: 9px;
    margin-right: 5px;
}

.tool-label-fill {
    margin-left: 24px;
    margin-right: 5px;
}

.num-input {
    width: 33px;
    height: 20px;
    line-height: 20px;
    text-align: center;
    font-size: 11px;
    color: #e0e0e0;
    background: #3a3a3a;
}

.num-btn {
    position: relative;
    width: 20px;
    height: 20px;
    background: #666;
    border-radius: 0 2px 2px 0;
}

.num-btn::after {
    content: '';
    position: absolute;
    left: 7px;
    top: 9px;
    border: 3px solid transparent;
    border-top: 3px solid #ddd;
    border-bottom: 0;
}

.lock-icons {
    display: flex;
    align-items: center;
    gap: 9px;
    margin-left: 10px;
}

.lock-check {
    width: 11px;
    height: 11px;
    background: repeating-conic-gradient(#8a8a8a 0 25%, #666 0 50%) 0 0 / 6px 6px;
}

/* Layer list */
.layers-wrap {
    flex: 1;
    min-height: 0;
    display: flex;
    border-top: 1px solid #333;
}

.layers {
    flex: 1;
    list-style: none;
    background: #535353;
    min-width: 0;
    padding-top: 8px;
}

.layer {
    position: relative;
    display: flex;
    align-items: center;
    height: 24.7px;
    border-bottom: 1px solid #333;
    padding-left: 32px;
    font-size: 11px;
    background: linear-gradient(to right, transparent 31px, #333 31px, #333 32px, transparent 32px);
}

.layer.is-selected {
    height: 32.5px;
    background: linear-gradient(to right, transparent 31px, #647a90 31px);
    color: #e4e8ee;
}

.eye {
    position: absolute;
    left: 8px;
    top: 50%;
    width: 15px;
    height: 12px;
    margin-top: -6px;
}

.disclose {
    margin-left: 4px;
    width: 0;
    height: 0;
    border: 4px solid transparent;
    border-left: 7px solid #e0e0e0;
    border-right: 0;
}

.folder {
    width: 15px;
    height: 13px;
    margin-left: 6px;
}

.layer-name {
    margin-left: 12px;
    color: #d4d4d4;
    white-space: nowrap;
}

.is-selected .thumb {
    margin-left: 17px;
    flex: none;
}

.is-selected .layer-name {
    margin-left: 8px;
    color: #e4e8ee;
}

.layer-fx {
    margin-left: auto;
    margin-right: 5px;
    font-family: "Liberation Serif", serif;
    font-style: italic;
    font-size: 15px;
    color: #e0e0e0;
}

.layer-fx-bar {
    width: 7px;
    height: 100%;
    margin-right: 1px;
    background: #9aa6b2;
}

.layers-scroll {
    flex: none;
    width: 18px;
    position: relative;
    background: #414141;
    border-left: 1px solid #333;
}

.layers-thumb {
    margin: 48px 4px 0 1px;
    height: 50px;
    background: #6d6d6d;
    border-radius: 3px;
}

/* File menu overlay */
.file-menu {
    position: absolute;
    left: 44px;
    top: 28px;
    width: 323px;
    height: 760px;
    padding-top: 3px;
    background: #f0f0f0;
    border-right: 1px solid #777;
    font-size: 15px;
    color: #1c1c1c;
}

.mi {
    position: relative;
    display: flex;
    justify-content: space-between;
    align-items: center;
    height: 25.77px;
    padding: 0 18px 0 23px;
    white-space: nowrap;
}

.mi kbd {
    font-family: inherit;
    font-size: 16.5px;
}

.mi em {
    font-style: normal;
    font-size: 16.5px;
}

.mi.is-disabled {
    color: #9a9a9a;
}

.mi.is-hover {
    margin: 0 5px 0 2px;
    padding: 0 13px 0 21px;
    color: #fff;
    background: #3a92f8;
}

.mi-sep {
    height: 12.75px;
    display: flex;
    align-items: center;
    padding: 0 4px 0 3px;
}

.mi-sep::before {
    content: '';
    flex: 1;
    height: 1px;
    background: #a4a4a4;
}

.mi-arrow {
    position: absolute;
    right: 9px;
    top: 4px;
    width: 0;
    height: 0;
    border: 5px solid transparent;
    border-left: 6px solid #111;
    border-right: 0;
}

.is-hover .mi-arrow {
    right: 4px;
    border-left-color: #fff;
}

.submenu {
    position: absolute;
    left: 316px;
    top: -1px;
    width: 100px;
    height: 27px;
    display: flex;
    align-items: center;
    padding-left: 23px;
    background: #3a92f8;
    border-left: 1px solid #fff;
    color: #fff;
    font-size: 15px;
}

.sub-check {
    position: absolute;
    left: 3px;
    top: 5px;
    font-size: 13px;
    line-height: 16px;
    font-family: "DejaVu Sans", sans-serif;
}

/* Red annotation rectangles */
.mark {
    position: absolute;
    border: 3px solid #d81f2c;
    pointer-events: none;
}

.mark-file {
    left: 43px;
    top: 6px;
    width: 54px;
    height: 27px;
}

.mark-generate {
    left: 43px;
    top: 414px;
    width: 421px;
    height: 31px;
}

.mark-layer {
    left: 703px;
    top: 602px;
    width: 505px;
    height: 37px;
}
```
